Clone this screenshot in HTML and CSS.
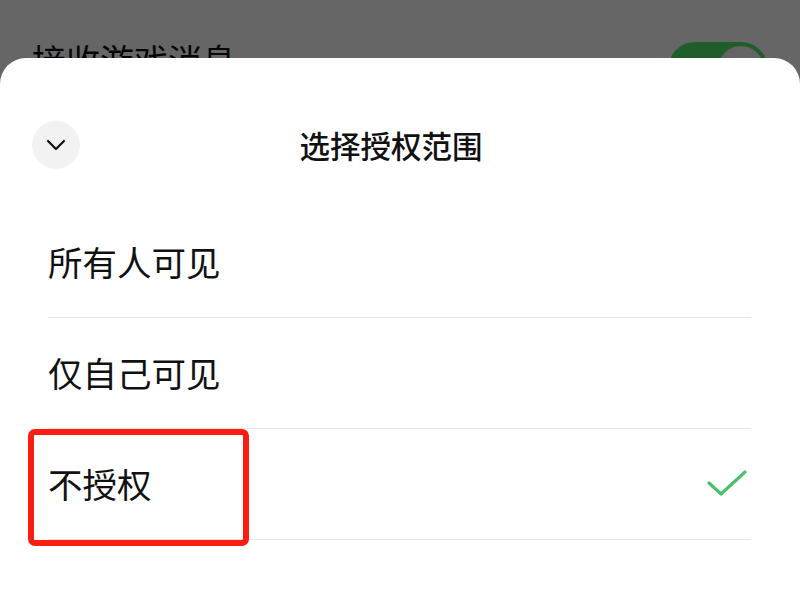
FILE: index.html
```html
<!DOCTYPE html>
<html lang="zh-CN">
<head>
<meta charset="utf-8">
<link rel="stylesheet" href="styles.css">
</head>
<body>
<div class="page">
  <div class="setting">
    <span class="setting-label">接收游戏消息</span>
    <span class="toggle"><span class="knob"></span></span>
  </div>
</div>
<div class="overlay"></div>
<div class="sheet">
  <div class="sheet-header">
    <button class="close-btn" aria-label="收起">
      <svg width="22" height="14" viewBox="0 0 22 14"><path d="M3 3 L11 11 L19 3" fill="none" stroke="#111" stroke-width="2.2" stroke-linecap="round" stroke-linejoin="round"/></svg>
    </button>
    <div class="title">选择授权范围</div>
    <div class="spacer"></div>
  </div>
  <ul class="options">
    <li class="option"><span>所有人可见</span></li>
    <li class="option"><span>仅自己可见</span></li>
    <li class="option selected">
      <span>不授权</span>
      <svg class="check" width="40" height="28" viewBox="0 0 40 28"><path d="M2 14 L14 25 L38 3" fill="none" stroke="#4cbe6c" stroke-width="3.2" stroke-linecap="round" stroke-linejoin="round"/></svg>
      <span class="highlight"></span>
    </li>
  </ul>
</div>
</body>
</html>
```
FILE: styles.css
```css
* { box-sizing: border-box; }
html, body {
  margin: 0;
  height: 100%;
  overflow: hidden;
}
body {
  background: #fff;
  font-family: "Noto Sans CJK SC", "Noto Sans", sans-serif;
  color: #111;
}
.page {
  padding: 40px 32px 0 32px;
}
.setting {
  display: flex;
  justify-content: space-between;
  align-items: flex-start;
}
.setting-label {
  font-size: 34px;
  line-height: 40px;
}
.toggle {
  display: block;
  width: 100px;
  height: 54px;
  margin-top: 2px;
  border-radius: 27px;
  background: #4eeb6b;
  position: relative;
}
.knob {
  position: absolute;
  right: 4px;
  top: 4px;
  width: 46px;
  height: 46px;
  border-radius: 50%;
  background: #fafafa;
}
.overlay {
  position: fixed;
  inset: 0;
  background: rgba(0, 0, 0, 0.6);
}
.sheet {
  position: fixed;
  left: 0;
  right: 0;
  top: 58px;
  bottom: 0;
  background: #fff;
  border-radius: 26px 26px 0 0;
}
.sheet-header {
  display: grid;
  grid-template-columns: 48px 1fr 48px;
  align-items: center;
  padding: 63px 32px 0 32px;
  height: 111px;
}
.close-btn {
  width: 48px;
  height: 48px;
  border-radius: 50%;
  border: none;
  background: #f2f2f2;
  padding: 0;
  display: flex;
  align-items: center;
  justify-content: center;
}
.title {
  text-align: center;
  font-size: 30.5px;
  font-weight: 500;
  line-height: 48px;
  padding-right: 18px;
  color: #111;
}
.options {
  list-style: none;
  margin: 38px 0 0 0;
  padding: 0 49px 0 48px;
}
.option {
  position: relative;
  height: 111px;
  border-bottom: 1px solid #e5e5e5;
  display: flex;
  align-items: center;
  justify-content: space-between;
  font-size: 34.5px;
  padding-bottom: 2px;
}
.check {
  margin-right: 4px;
}
.highlight {
  position: absolute;
  left: -20px;
  top: 0;
  width: 221px;
  height: 117px;
  border: 6px solid #fb1d12;
  border-radius: 7px;
}
```
